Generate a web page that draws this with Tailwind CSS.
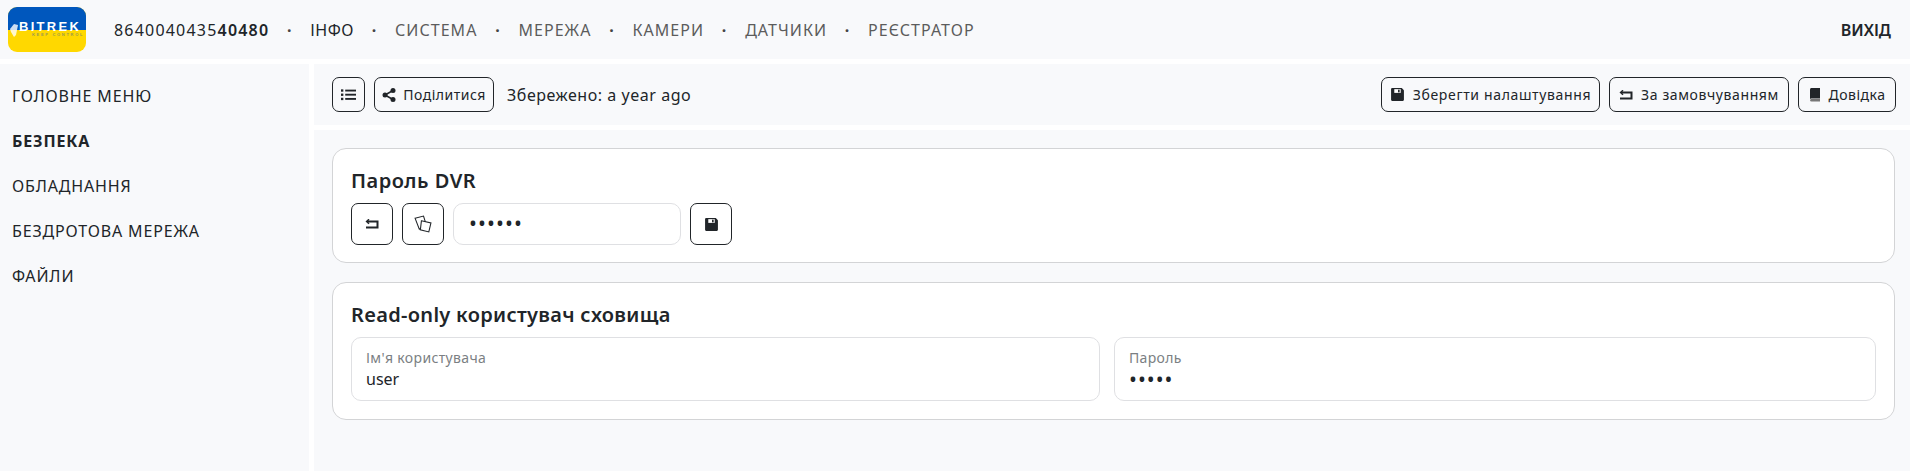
<!DOCTYPE html>
<html lang="uk">
<head>
    <meta charset="UTF-8">
    <meta name="viewport" content="width=device-width, initial-scale=1.0">
    <title>BITREK</title>
    <script src="https://cdn.jsdelivr.net/npm/@tailwindcss/browser@4"></script>
</head>
<body class="bg-white text-[#212529] font-['Noto_Sans',sans-serif] h-[471px] overflow-hidden">
    <!-- Header -->
    <header class="h-[59px] bg-[#f8f9fb] flex items-center pl-2 pr-[19px] text-[16px]">
        <div class="relative w-[78px] h-[45px] rounded-[9px] overflow-hidden bg-[#ffd800] shrink-0">
            <div class="h-[23px] bg-[#0057bd]"></div>
            <svg class="absolute left-[2px] top-[17px] w-[8px] h-[13px]" viewBox="0 0 8 13"><path d="M4 0L8 1L7 6L6 11L4 13L1 8L0 5Z" fill="#fff" opacity=".8"/></svg>
            <span class="absolute left-[11px] top-[15px] text-[13px] leading-[10px] font-black tracking-[2.300px] text-white font-['Liberation_Sans',sans-serif]">BITREK</span>
            <span class="absolute left-[24px] top-[25px] text-[4px] leading-[5px] font-bold tracking-[1.700px] text-[#9a9a50] font-['Liberation_Sans',sans-serif] whitespace-nowrap">KEEP CONTROL</span>
        </div>
        <div class="ml-[28px] tracking-[1.200px]">8640040435<span class="font-semibold">40480</span></div>
        <nav class="flex items-center text-[#5c5c5c] tracking-[1.050px]">
            <span class="w-[41px] text-center font-bold text-[#444]">·</span>
            <a class="text-[#212529] tracking-[0.500px]">ІНФО</a>
            <span class="w-[41px] text-center font-bold text-[#444]">·</span>
            <a>СИСТЕМА</a>
            <span class="w-[41px] text-center font-bold text-[#444]">·</span>
            <a>МЕРЕЖА</a>
            <span class="w-[41px] text-center font-bold text-[#444]">·</span>
            <a>КАМЕРИ</a>
            <span class="w-[41px] text-center font-bold text-[#444]">·</span>
            <a>ДАТЧИКИ</a>
            <span class="w-[41px] text-center font-bold text-[#444]">·</span>
            <a>РЕЄСТРАТОР</a>
        </nav>
        <a class="ml-auto font-semibold">ВИХІД</a>
    </header>

    <div class="flex mt-[5px] h-[407px]">
        <!-- Sidebar -->
        <aside class="w-[309px] shrink-0 bg-[#f8f9fb] pl-3 pt-[9px] text-[16px] tracking-[0.850px]">
            <div class="h-[45px] flex items-center">ГОЛОВНЕ МЕНЮ</div>
            <div class="h-[45px] flex items-center font-bold">БЕЗПЕКА</div>
            <div class="h-[45px] flex items-center">ОБЛАДНАННЯ</div>
            <div class="h-[45px] flex items-center">БЕЗДРОТОВА МЕРЕЖА</div>
            <div class="h-[45px] flex items-center">ФАЙЛИ</div>
        </aside>

        <main class="ml-[5px] flex-1 flex flex-col">
            <!-- Toolbar -->
            <div class="h-[61px] bg-[#f8f9fb] flex items-center pl-[18px] pr-[14px] gap-[9px] text-[14px]">
                <button class="w-[33px] h-[35px] border border-[#212529] rounded-[7px] flex items-center justify-center">
                    <svg class="w-[15px] h-[15px]" viewBox="0 0 16 16" fill="#212529"><rect x="0" y="2.500" width="2.500" height="2.500"/><rect x="0" y="7" width="2.500" height="2.500"/><rect x="0" y="11.500" width="2.500" height="2.500"/><rect x="4.500" y="2.800" width="11.500" height="2"/><rect x="4.500" y="7.200" width="11.500" height="2"/><rect x="4.500" y="11.700" width="11.500" height="2"/></svg>
                </button>
                <button class="w-[120px] h-[35px] border border-[#212529] rounded-[7px] flex items-center justify-center gap-[7px] tracking-[0.500px]">
                    <svg class="w-[14px] h-[14px]" viewBox="0 0 14 14" fill="#212529"><circle cx="11" cy="2.500" r="2.500"/><circle cx="3" cy="7" r="2.500"/><circle cx="11" cy="11.500" r="2.500"/><path d="M3 7L11 2.500M3 7L11 11.500" stroke="#212529" stroke-width="1.500"/></svg>
                    Поділитися
                </button>
                <span class="ml-[4px] text-[16px] tracking-[0.550px]">Збережено: a year ago</span>
                <button class="ml-auto w-[219px] h-[35px] border border-[#212529] rounded-[7px] flex items-center justify-center gap-[8px] tracking-[0.650px]">
                    <svg class="w-[15px] h-[15px]" viewBox="0 0 14 14"><path d="M2 1H11L13 3V12A1 1 0 0 1 12 13H2A1 1 0 0 1 1 12V2A1 1 0 0 1 2 1Z" fill="#212529"/><rect x="4" y="2" width="6" height="3.500" fill="#fff"/><rect x="7.500" y="2.500" width="1.500" height="2.500" fill="#212529"/></svg>
                    Зберегти налаштування
                </button>
                <button class="w-[180px] h-[35px] border border-[#212529] rounded-[7px] flex items-center justify-center gap-[8px] tracking-[0.600px]">
                    <svg class="w-[14px] h-[10px]" viewBox="0 0 14 10" fill="none" stroke="#212529"><path d="M2 2.500H12.500V8.500H1" stroke-width="2"/><path d="M4 .3L1.600 2.500L4 4.700" stroke-width="1.500"/></svg>
                    За замовчуванням
                </button>
                <button class="w-[98px] h-[35px] border border-[#212529] rounded-[7px] flex items-center justify-center gap-[8px] tracking-[0.500px]">
                    <svg class="w-[12px] h-[14px]" viewBox="0 0 12 14" fill="#212529"><path d="M2 0H11V10.500H2A1.500 1.500 0 0 0 1 11V2A2 2 0 0 1 2 0Z"/><path d="M1 12A1.500 1.500 0 0 1 2.500 11H11V13.500H2.500A1.500 1.500 0 0 1 1 12Z" fill="#777"/></svg>
                    Довідка
                </button>
            </div>

            <!-- Content -->
            <div class="mt-[5px] flex-1 bg-[#f8f9fb] pt-[18px] pl-[18px] pr-[15px]">
                <section class="h-[115px] bg-white border border-[#d3d4d6] rounded-[14px] pl-[18px] pt-[17px]">
                    <h2 class="text-[20px] leading-[30px] font-semibold tracking-[0.500px]">Пароль DVR</h2>
                    <div class="flex gap-[9px] mt-[7px]">
                        <button class="w-[42px] h-[42px] border border-[#212529] rounded-[7px] flex items-center justify-center">
                            <svg class="w-[14px] h-[10px]" viewBox="0 0 14 10" fill="none" stroke="#212529"><path d="M2 2.500H12.500V8.500H1" stroke-width="2"/><path d="M4 .3L1.600 2.500L4 4.700" stroke-width="1.500"/></svg>
                        </button>
                        <button class="w-[42px] h-[42px] border border-[#212529] rounded-[7px] flex items-center justify-center">
                            <svg class="w-[18px] h-[18px]" viewBox="0 0 17 17" fill="#fff" stroke="#212529" stroke-width="1"><path d="M1 3L9 1L11.500 9L5 13.500Z"/><path d="M7 5.500L16 7.500L14 16L6 14Z"/></svg>
                        </button>
                        <div class="w-[228px] h-[42px] border border-[#dfe0e3] rounded-[10px] flex items-center pl-[15px] text-[21px] tracking-[1.100px] text-[#212529]">••••••</div>
                        <button class="w-[42px] h-[42px] border border-[#212529] rounded-[7px] flex items-center justify-center">
                            <svg class="w-[15px] h-[15px]" viewBox="0 0 14 14"><path d="M2 1H11L13 3V12A1 1 0 0 1 12 13H2A1 1 0 0 1 1 12V2A1 1 0 0 1 2 1Z" fill="#212529"/><rect x="4" y="2" width="6" height="3.500" fill="#fff"/><rect x="7.500" y="2.500" width="1.500" height="2.500" fill="#212529"/></svg>
                        </button>
                    </div>
                </section>

                <section class="mt-[19px] h-[138px] bg-white border border-[#d3d4d6] rounded-[14px] px-[18px] pt-[17px]">
                    <h2 class="text-[20px] leading-[30px] font-semibold tracking-[0.300px]">Read-only користувач сховища</h2>
                    <div class="grid grid-cols-[749px_1fr] gap-[14px] mt-[7px]">
                        <div class="h-[64px] border border-[#dfe0e3] rounded-[10px] pl-[14px] pt-[10px]">
                            <div class="text-[14px] leading-[20px] text-[#7b7f83] tracking-[0.350px]">Ім'я користувача</div>
                            <div class="text-[16px] leading-[22px]">user</div>
                        </div>
                        <div class="h-[64px] border border-[#dfe0e3] rounded-[10px] pl-[14px] pt-[10px]">
                            <div class="text-[14px] leading-[20px] text-[#7b7f83] tracking-[0.350px]">Пароль</div>
                            <div class="text-[21px] leading-[22px] tracking-[1px]">•••••</div>
                        </div>
                    </div>
                </section>
            </div>
        </main>
    </div>
</body>
</html>
